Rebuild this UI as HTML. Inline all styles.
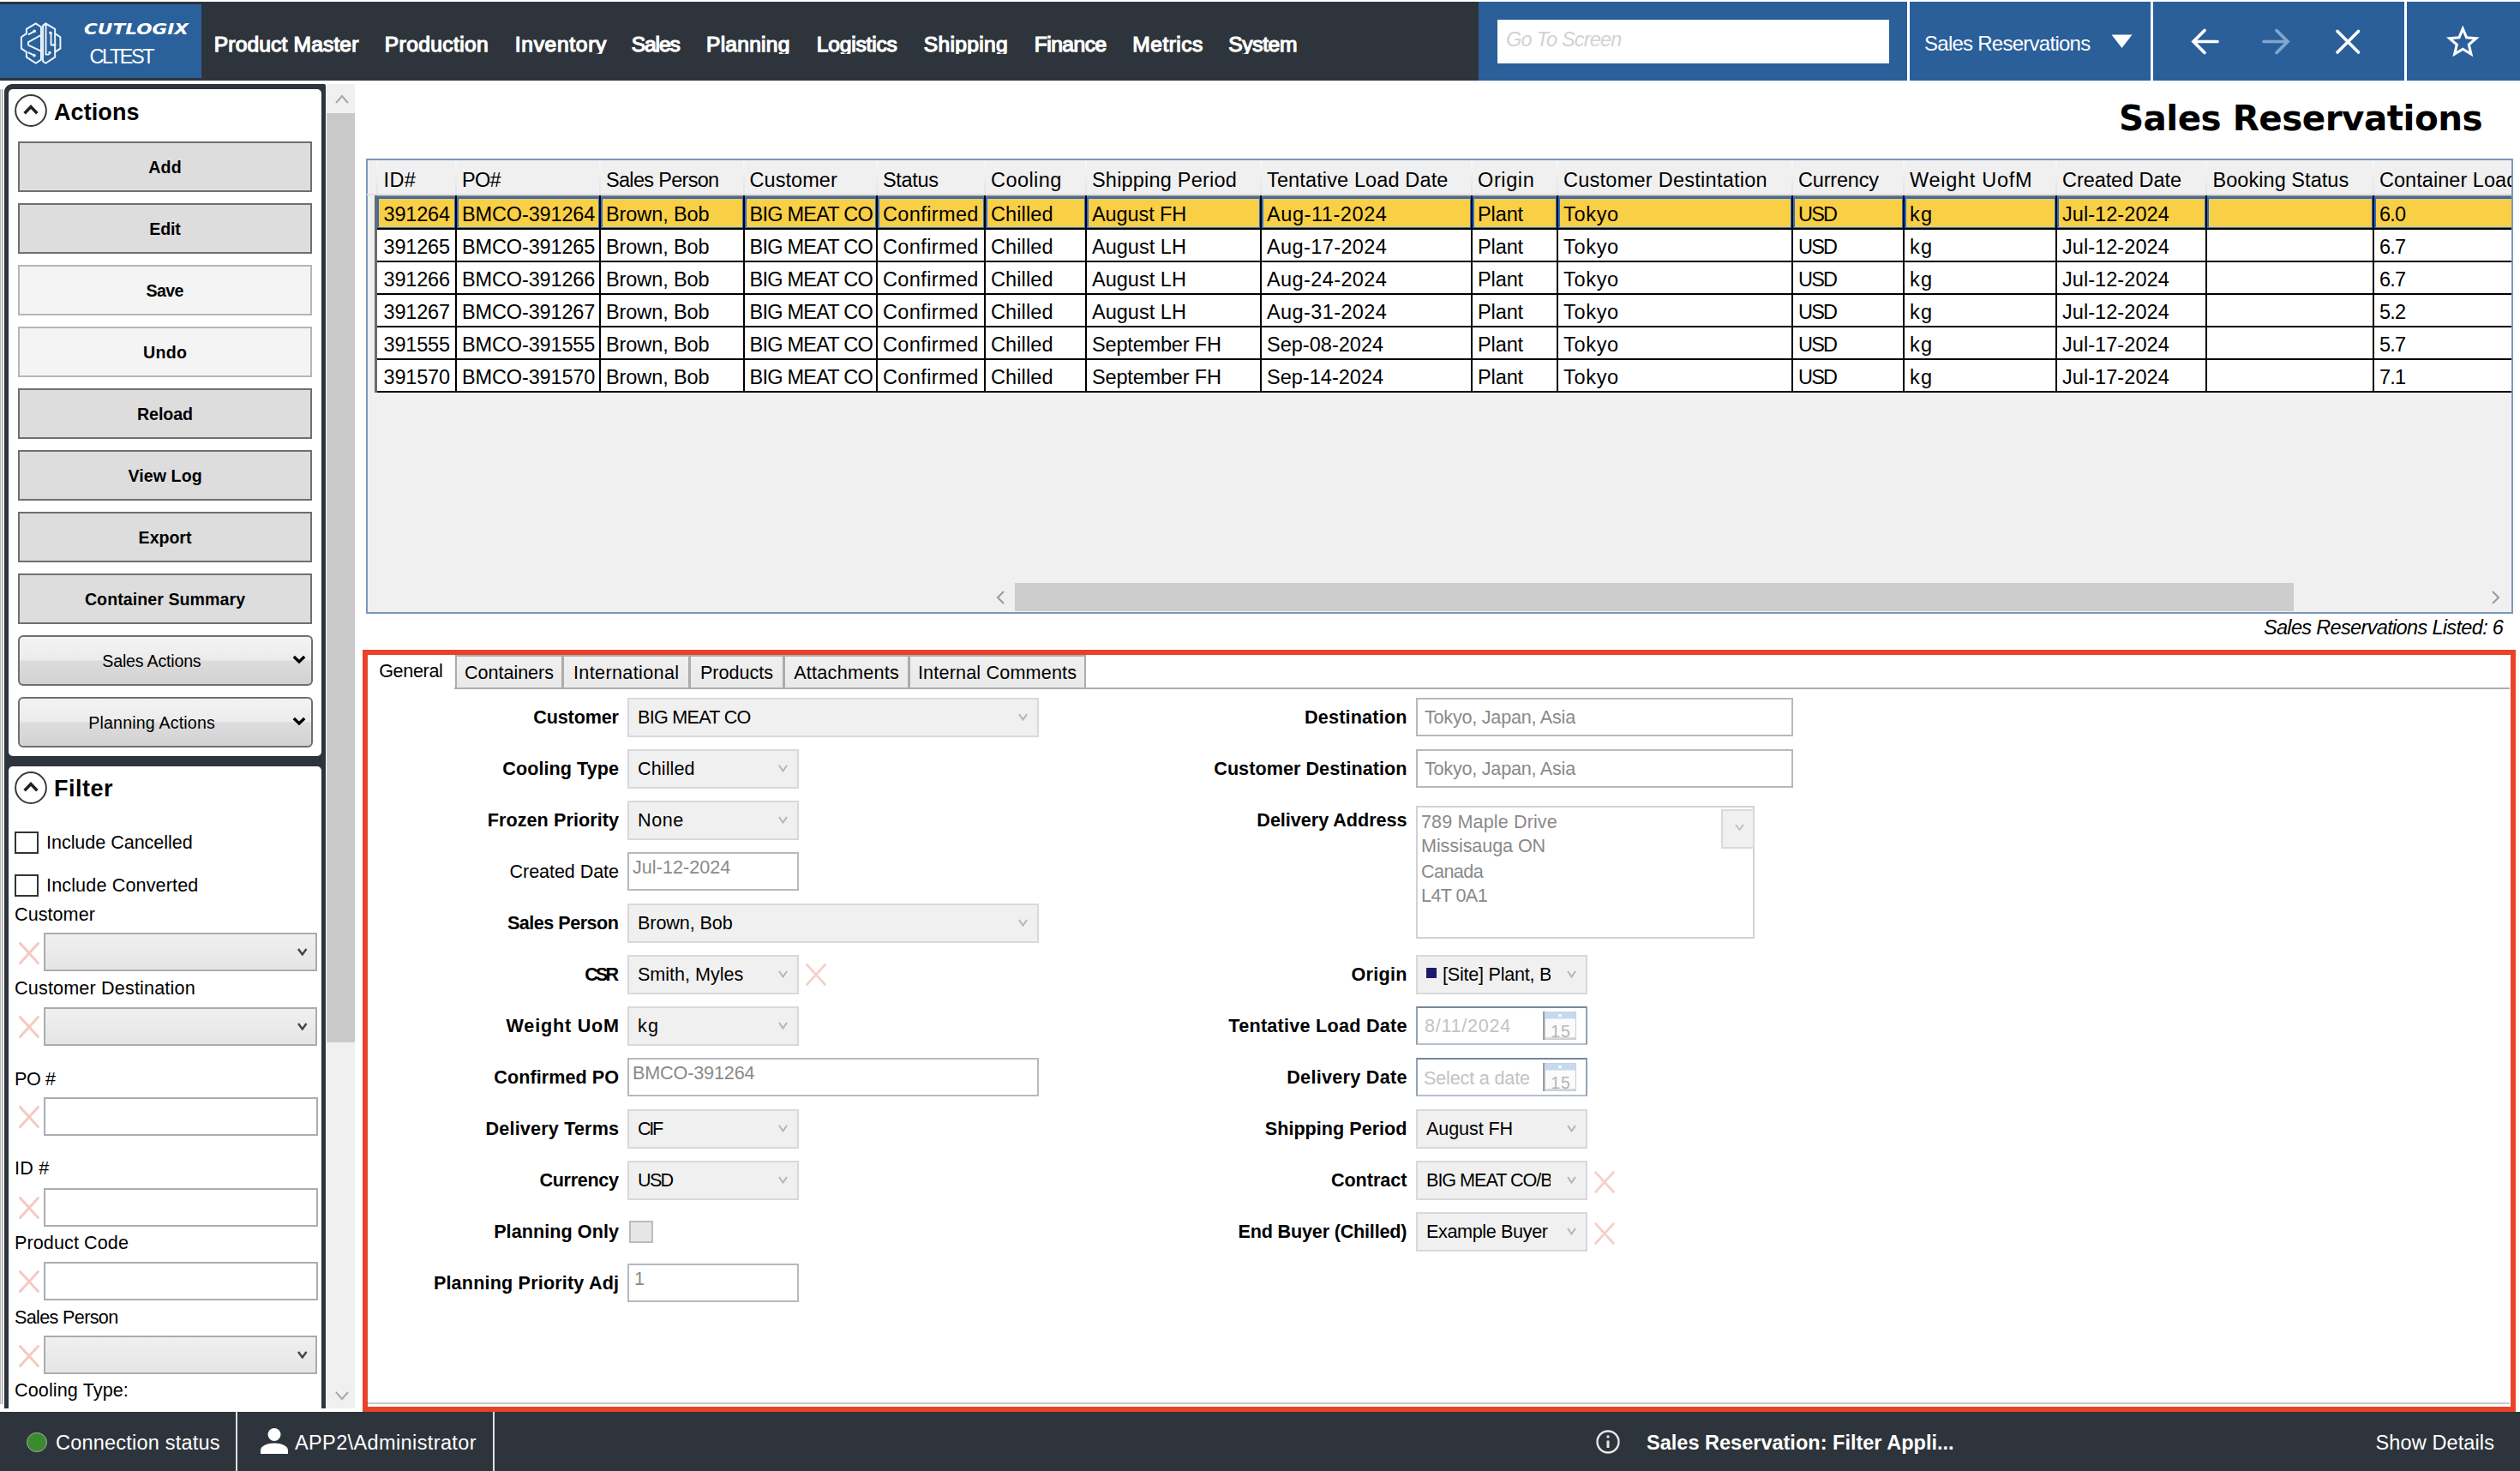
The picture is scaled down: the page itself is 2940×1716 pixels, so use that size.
<!DOCTYPE html>
<html><head><meta charset="utf-8"><title>Sales Reservations</title>
<style>
html,body{margin:0;padding:0;background:#fff;}
body{width:2940px;height:1716px;overflow:hidden;position:relative;font-family:"Liberation Sans",sans-serif;}
.t{position:absolute;white-space:nowrap;}
</style></head>
<body>
<!-- top -->
<div style="position:absolute;left:0px;top:2px;width:2940px;height:92px;background:#2e343b;"></div>
<div style="position:absolute;left:0px;top:5px;width:235px;height:86px;background:#2b619b;"></div>
<div style="position:absolute;left:1725px;top:2px;width:1215px;height:92px;background:#2a5f9a;"></div>
<svg style="position:absolute;left:14px;top:16px" width="70" height="68" viewBox="0 0 1514 1471" fill="none" stroke="#eef4fa" stroke-width="42" stroke-linejoin="round" stroke-linecap="round">
<path d="M600 245 L365 385 V500 L235 590 V880 L365 965 V1095 L600 1250 L735 1160 V335 Z"/>
<path d="M850 245 L1085 385 V500 L1220 590 V880 L1085 965 V1095 L850 1250 L780 1200 V300 Z"/>
<path d="M735 540 L410 715 V790 L735 945"/>
<path d="M570 440 L420 520 M560 1050 L420 980"/>
<path d="M855 290 V1030 H930 M985 490 V790 L1070 790 M1085 500 V965"/>
<g fill="#e8f0f8" stroke="none"><circle cx="565" cy="440" r="40"/><circle cx="560" cy="1050" r="40"/><circle cx="950" cy="985" r="38"/><circle cx="972" cy="482" r="38"/><circle cx="1075" cy="782" r="36"/><circle cx="853" cy="285" r="30"/></g>
</svg>
<div class="t" style="left:98px;top:21px;height:26px;line-height:26px;font-family:'DejaVu Sans',sans-serif;font-weight:bold;font-style:italic;font-size:17.5px;color:#fff;transform-origin:0 50%;transform:scaleX(1.235);">CUTLOGIX</div>
<div id="t1" class="t" style="top:43.1px;height:47px;line-height:47px;font-size:23.5px;letter-spacing:-2.45px;color:#fff;left:104.5px;">CLTEST</div>
<div style="position:absolute;left:0;top:0;width:1725px;height:62.5px;overflow:hidden"><div id="t2" class="t" style="top:27.4px;height:49px;line-height:49px;font-size:24.6px;letter-spacing:0.14px;color:#fff;left:249.8px;-webkit-text-stroke:1.25px #fff;">Product Master</div><div id="t3" class="t" style="top:27.4px;height:49px;line-height:49px;font-size:24.6px;letter-spacing:0.38px;color:#fff;left:448.8px;-webkit-text-stroke:1.25px #fff;">Production</div><div id="t4" class="t" style="top:27.4px;height:49px;line-height:49px;font-size:24.6px;letter-spacing:0.67px;color:#fff;left:600.8px;-webkit-text-stroke:1.25px #fff;">Inventory</div><div id="t5" class="t" style="top:27.4px;height:49px;line-height:49px;font-size:24.6px;letter-spacing:-1.13px;color:#fff;left:736.8px;-webkit-text-stroke:1.25px #fff;">Sales</div><div id="t6" class="t" style="top:27.4px;height:49px;line-height:49px;font-size:24.6px;letter-spacing:0.24px;color:#fff;left:824.0px;-webkit-text-stroke:1.25px #fff;">Planning</div><div id="t7" class="t" style="top:27.4px;height:49px;line-height:49px;font-size:24.6px;letter-spacing:-0.21px;color:#fff;left:952.8px;-webkit-text-stroke:1.25px #fff;">Logistics</div><div id="t8" class="t" style="top:27.4px;height:49px;line-height:49px;font-size:24.6px;letter-spacing:0.32px;color:#fff;left:1077.7px;-webkit-text-stroke:1.25px #fff;">Shipping</div><div id="t9" class="t" style="top:27.4px;height:49px;line-height:49px;font-size:24.6px;letter-spacing:-0.50px;color:#fff;left:1206.7px;-webkit-text-stroke:1.25px #fff;">Finance</div><div id="t10" class="t" style="top:27.4px;height:49px;line-height:49px;font-size:24.6px;letter-spacing:0.46px;color:#fff;left:1321.3px;-webkit-text-stroke:1.25px #fff;">Metrics</div><div id="t11" class="t" style="top:27.4px;height:49px;line-height:49px;font-size:24.6px;letter-spacing:-0.38px;color:#fff;left:1433.3px;-webkit-text-stroke:1.25px #fff;">System</div></div>
<div style="position:absolute;left:1747px;top:23px;width:457px;height:51px;background:#fff;"></div>
<div id="t12" class="t" style="top:23.3px;height:47px;line-height:47px;font-size:23.5px;letter-spacing:-0.79px;color:#d2d2d2;font-style:italic;left:1757.0px;">Go To Screen</div>
<div style="position:absolute;left:2225px;top:2px;width:3px;height:92px;background:#fff;"></div>
<div style="position:absolute;left:2509px;top:2px;width:3px;height:92px;background:#fff;"></div>
<div style="position:absolute;left:2805px;top:2px;width:3px;height:92px;background:#fff;"></div>
<div id="t13" class="t" style="top:27.1px;height:48px;line-height:48px;font-size:24px;letter-spacing:-0.74px;color:#fff;left:2245.0px;">Sales Reservations</div>
<svg style="position:absolute;left:2440px;top:20px" width="480" height="60" viewBox="2440 20 480 60" fill="none" stroke="#fff" stroke-width="3.7" stroke-linecap="round">
<path d="M2463.5 40.5 H2487.5 L2475.5 56 Z" fill="#fff" stroke="none"/>
<path d="M2587 48.5 H2559 M2572 35.5 L2559 48.5 L2572 61.5"/>
<path d="M2641 48.5 H2669 M2656 35.5 L2669 48.5 L2656 61.5" stroke="#82a6cd"/>
<path d="M2727 36.5 L2751.5 61 M2751.5 36.5 L2727 61"/>
<path d="M2873.3 33.5 L2877.6 43.9 L2888.8 44.8 L2880.3 52.1 L2882.9 63 L2873.3 57.2 L2863.7 63 L2866.3 52.1 L2857.8 44.8 L2869 43.9 Z" stroke-width="3.1" stroke-linejoin="miter"/>
</svg>
<!-- left -->
<div style="position:absolute;left:0px;top:104px;width:1px;height:1534px;background:#b8b8b8;"></div>
<div style="position:absolute;left:2px;top:104px;width:1px;height:1534px;background:#8e8e8e;"></div>
<div style="position:absolute;left:5px;top:98px;width:375px;height:1550px;background:#2e343b;border-radius:9px 2px 0 0;"></div>
<div style="position:absolute;left:10px;top:104px;width:365px;height:778px;background:#fff;border-radius:5px;"></div>
<div style="position:absolute;left:10px;top:894px;width:365px;height:749px;background:#fff;border-radius:5px 5px 0 0;"></div>
<div style="position:absolute;left:0px;top:1643px;width:420px;height:5px;background:#fff;"></div>
<div style="position:absolute;left:381px;top:98px;width:33px;height:1545px;background:#f0f0f0;"></div>
<div style="position:absolute;left:381px;top:132px;width:33px;height:1084px;background:#c9c9c9;"></div>
<svg style="position:absolute;left:390px;top:110px" width="18" height="12" viewBox="-2 -2 18 12" fill="none" stroke="#a8a8a8" stroke-width="2"><path d="M0 8 L7 0 L14 8"/></svg>
<svg style="position:absolute;left:390px;top:1622px" width="18" height="12" viewBox="-2 -2 18 12" fill="none" stroke="#a8a8a8" stroke-width="2"><path d="M0 0 L7.0 8 L14 0"/></svg>
<svg style="position:absolute;left:13.5px;top:107.30000000000001px" width="44" height="44" viewBox="-22 -22 44 44" fill="none"><circle r="17.9" stroke="#3a3a3a" stroke-width="2"/><path d="M-7.4 3.2 L0 -4.4 L7.4 3.2" stroke="#222" stroke-width="3.5"/></svg>
<div id="t14" class="t" style="top:103.8px;height:54px;line-height:54px;font-size:27px;letter-spacing:0.08px;color:#000;font-weight:bold;left:63.0px;">Actions</div>
<svg style="position:absolute;left:13.5px;top:897px" width="44" height="44" viewBox="-22 -22 44 44" fill="none"><circle r="17.9" stroke="#3a3a3a" stroke-width="2"/><path d="M-7.4 3.2 L0 -4.4 L7.4 3.2" stroke="#222" stroke-width="3.5"/></svg>
<div id="t15" class="t" style="top:893.3px;height:54px;line-height:54px;font-size:27px;letter-spacing:0.50px;color:#000;font-weight:bold;left:63.0px;">Filter</div>
<div style="position:absolute;left:21px;top:165px;width:339px;height:55px;background:#dddddd;border:2px solid #6f6f6f;"></div>
<div id="t16" class="t" style="top:175.8px;height:39px;line-height:39px;font-size:19.6px;letter-spacing:0.17px;color:#000;font-weight:bold;left:-807.4px;width:2000px;text-align:center;">Add</div>
<div style="position:absolute;left:21px;top:237px;width:339px;height:55px;background:#dddddd;border:2px solid #6f6f6f;"></div>
<div id="t17" class="t" style="top:247.8px;height:39px;line-height:39px;font-size:19.6px;letter-spacing:-0.23px;color:#000;font-weight:bold;left:-807.6px;width:2000px;text-align:center;">Edit</div>
<div style="position:absolute;left:21px;top:309px;width:339px;height:55px;background:#f4f4f4;border:2px solid #b4b6b8;"></div>
<div id="t18" class="t" style="top:319.8px;height:39px;line-height:39px;font-size:19.6px;letter-spacing:-0.57px;color:#000;font-weight:bold;left:-807.8px;width:2000px;text-align:center;">Save</div>
<div style="position:absolute;left:21px;top:381px;width:339px;height:55px;background:#f4f4f4;border:2px solid #b4b6b8;"></div>
<div id="t19" class="t" style="top:391.8px;height:39px;line-height:39px;font-size:19.6px;letter-spacing:0.29px;color:#000;font-weight:bold;left:-807.4px;width:2000px;text-align:center;">Undo</div>
<div style="position:absolute;left:21px;top:453px;width:339px;height:55px;background:#dddddd;border:2px solid #6f6f6f;"></div>
<div id="t20" class="t" style="top:463.8px;height:39px;line-height:39px;font-size:19.6px;letter-spacing:-0.04px;color:#000;font-weight:bold;left:-807.5px;width:2000px;text-align:center;">Reload</div>
<div style="position:absolute;left:21px;top:525px;width:339px;height:55px;background:#dddddd;border:2px solid #6f6f6f;"></div>
<div id="t21" class="t" style="top:535.8px;height:39px;line-height:39px;font-size:19.6px;letter-spacing:0.10px;color:#000;font-weight:bold;left:-807.4px;width:2000px;text-align:center;">View Log</div>
<div style="position:absolute;left:21px;top:597px;width:339px;height:55px;background:#dddddd;border:2px solid #6f6f6f;"></div>
<div id="t22" class="t" style="top:607.8px;height:39px;line-height:39px;font-size:19.6px;letter-spacing:-0.05px;color:#000;font-weight:bold;left:-807.5px;width:2000px;text-align:center;">Export</div>
<div style="position:absolute;left:21px;top:669px;width:339px;height:55px;background:#dddddd;border:2px solid #6f6f6f;"></div>
<div id="t23" class="t" style="top:679.8px;height:39px;line-height:39px;font-size:19.6px;letter-spacing:0.06px;color:#000;font-weight:bold;left:-807.5px;width:2000px;text-align:center;">Container Summary</div>
<div style="position:absolute;left:21px;top:741px;width:340px;height:55px;border:2px solid #6f6f6f;border-radius:6px;background:linear-gradient(#f3f3f3 0%,#ececec 48%,#dcdcdc 52%,#d2d2d2 100%);"></div>
<div id="t24" class="t" style="top:751.8px;height:39px;line-height:39px;font-size:19.6px;letter-spacing:-0.19px;color:#000;left:-823.1px;width:2000px;text-align:center;">Sales Actions</div>
<svg style="position:absolute;left:341px;top:764px" width="16" height="12" viewBox="0 0 16 12"><path d="M1.8 2 L8 8 L14.2 2" fill="none" stroke="#000" stroke-width="3.4"/></svg>
<div style="position:absolute;left:21px;top:813px;width:340px;height:55px;border:2px solid #6f6f6f;border-radius:6px;background:linear-gradient(#f3f3f3 0%,#ececec 48%,#dcdcdc 52%,#d2d2d2 100%);"></div>
<div id="t25" class="t" style="top:823.8px;height:39px;line-height:39px;font-size:19.6px;letter-spacing:0.18px;color:#000;left:-822.9px;width:2000px;text-align:center;">Planning Actions</div>
<svg style="position:absolute;left:341px;top:836px" width="16" height="12" viewBox="0 0 16 12"><path d="M1.8 2 L8 8 L14.2 2" fill="none" stroke="#000" stroke-width="3.4"/></svg>
<div style="position:absolute;left:17px;top:970px;width:24px;height:22px;border:2px solid #333;background:#fff;"></div>
<div style="position:absolute;left:17px;top:1020px;width:24px;height:22px;border:2px solid #333;background:#fff;"></div>
<div id="t26" class="t" style="top:960.6px;height:43px;line-height:43px;font-size:21.6px;letter-spacing:-0.06px;color:#000;left:54.0px;">Include Cancelled</div>
<div id="t27" class="t" style="top:1010.6px;height:43px;line-height:43px;font-size:21.6px;letter-spacing:0.13px;color:#000;left:54.0px;">Include Converted</div>
<div id="t28" class="t" style="top:1044.8px;height:43px;line-height:43px;font-size:21.6px;letter-spacing:0.04px;color:#000;left:17.0px;">Customer</div>
<svg style="position:absolute;left:21.5px;top:1099px" width="24" height="26" viewBox="0 0 24 26" fill="none" stroke="#f5c9c2" stroke-width="3" stroke-linecap="round"><path d="M1.5 1.5 L22.5 24.5 M22.5 1.5 L1.5 24.5"/></svg>
<div style="position:absolute;left:50.5px;top:1088px;width:315.5px;height:41px;border:2px solid #acacac;background:linear-gradient(#f0f0f0,#e5e5e5);"></div>
<svg style="position:absolute;left:345.5px;top:1104.5px" width="13.5" height="10.5" viewBox="-2 -2 13.5 10.5" fill="none" stroke="#444" stroke-width="2.4"><path d="M0 0 L4.75 6.5 L9.5 0"/></svg>
<div id="t29" class="t" style="top:1130.8px;height:43px;line-height:43px;font-size:21.6px;letter-spacing:0.16px;color:#000;left:17.0px;">Customer Destination</div>
<svg style="position:absolute;left:21.5px;top:1185px" width="24" height="26" viewBox="0 0 24 26" fill="none" stroke="#f5c9c2" stroke-width="3" stroke-linecap="round"><path d="M1.5 1.5 L22.5 24.5 M22.5 1.5 L1.5 24.5"/></svg>
<div style="position:absolute;left:50.5px;top:1175px;width:315.5px;height:41px;border:2px solid #acacac;background:linear-gradient(#f0f0f0,#e5e5e5);"></div>
<svg style="position:absolute;left:345.5px;top:1191.5px" width="13.5" height="10.5" viewBox="-2 -2 13.5 10.5" fill="none" stroke="#444" stroke-width="2.4"><path d="M0 0 L4.75 6.5 L9.5 0"/></svg>
<div id="t30" class="t" style="top:1236.8px;height:43px;line-height:43px;font-size:21.6px;letter-spacing:-0.43px;color:#000;left:17.0px;">PO #</div>
<svg style="position:absolute;left:21.5px;top:1290px" width="24" height="26" viewBox="0 0 24 26" fill="none" stroke="#f5c9c2" stroke-width="3" stroke-linecap="round"><path d="M1.5 1.5 L22.5 24.5 M22.5 1.5 L1.5 24.5"/></svg>
<div style="position:absolute;left:51px;top:1280px;width:316px;height:41px;border:2px solid #abadb3;background:#fff;"></div>
<div id="t31" class="t" style="top:1340.8px;height:43px;line-height:43px;font-size:21.6px;letter-spacing:0.23px;color:#000;left:17.0px;">ID #</div>
<svg style="position:absolute;left:21.5px;top:1396px" width="24" height="26" viewBox="0 0 24 26" fill="none" stroke="#f5c9c2" stroke-width="3" stroke-linecap="round"><path d="M1.5 1.5 L22.5 24.5 M22.5 1.5 L1.5 24.5"/></svg>
<div style="position:absolute;left:51px;top:1386px;width:316px;height:41px;border:2px solid #abadb3;background:#fff;"></div>
<div id="t32" class="t" style="top:1427.8px;height:43px;line-height:43px;font-size:21.6px;letter-spacing:0.08px;color:#000;left:17.0px;">Product Code</div>
<svg style="position:absolute;left:21.5px;top:1482px" width="24" height="26" viewBox="0 0 24 26" fill="none" stroke="#f5c9c2" stroke-width="3" stroke-linecap="round"><path d="M1.5 1.5 L22.5 24.5 M22.5 1.5 L1.5 24.5"/></svg>
<div style="position:absolute;left:51px;top:1472px;width:316px;height:41px;border:2px solid #abadb3;background:#fff;"></div>
<div id="t33" class="t" style="top:1514.8px;height:43px;line-height:43px;font-size:21.6px;letter-spacing:-0.66px;color:#000;left:17.0px;">Sales Person</div>
<svg style="position:absolute;left:21.5px;top:1569px" width="24" height="26" viewBox="0 0 24 26" fill="none" stroke="#f5c9c2" stroke-width="3" stroke-linecap="round"><path d="M1.5 1.5 L22.5 24.5 M22.5 1.5 L1.5 24.5"/></svg>
<div style="position:absolute;left:50.5px;top:1558px;width:315.5px;height:41px;border:2px solid #acacac;background:linear-gradient(#f0f0f0,#e5e5e5);"></div>
<svg style="position:absolute;left:345.5px;top:1574.5px" width="13.5" height="10.5" viewBox="-2 -2 13.5 10.5" fill="none" stroke="#444" stroke-width="2.4"><path d="M0 0 L4.75 6.5 L9.5 0"/></svg>
<div id="t34" class="t" style="top:1599.8px;height:43px;line-height:43px;font-size:21.6px;letter-spacing:0.10px;color:#000;left:17.0px;">Cooling Type:</div>
<!-- grid -->
<div class="t" style="left:896px;width:2000px;text-align:right;top:108px;height:60px;line-height:60px;font-family:'DejaVu Sans',sans-serif;font-weight:bold;font-size:40.5px;letter-spacing:-0.55px;color:#000;">Sales Reservations</div>
<div style="position:absolute;left:426.5px;top:185px;width:2501px;height:526.5px;border:2px solid #7b97bd;background:#f0f0f0;"></div>
<div style="position:absolute;left:0;top:0;width:2929.5px;height:713px;overflow:hidden"><div style="position:absolute;left:439px;top:188px;width:2px;height:40px;background:linear-gradient(#f8f8f8,#e2e2e2);"></div><div id="t35" class="t" style="top:187.0px;height:47px;line-height:47px;font-size:23.5px;letter-spacing:0.39px;color:#000;left:447.5px;">ID#</div><div style="position:absolute;left:531px;top:188px;width:2px;height:40px;background:linear-gradient(#f8f8f8,#e2e2e2);"></div><div id="t36" class="t" style="top:187.0px;height:47px;line-height:47px;font-size:23.5px;letter-spacing:-0.67px;color:#000;left:539.0px;">PO#</div><div style="position:absolute;left:699px;top:188px;width:2px;height:40px;background:linear-gradient(#f8f8f8,#e2e2e2);"></div><div id="t37" class="t" style="top:187.0px;height:47px;line-height:47px;font-size:23.5px;letter-spacing:-0.69px;color:#000;left:707.0px;">Sales Person</div><div style="position:absolute;left:867px;top:188px;width:2px;height:40px;background:linear-gradient(#f8f8f8,#e2e2e2);"></div><div id="t38" class="t" style="top:187.0px;height:47px;line-height:47px;font-size:23.5px;letter-spacing:0.06px;color:#000;left:874.5px;">Customer</div><div style="position:absolute;left:1022px;top:188px;width:2px;height:40px;background:linear-gradient(#f8f8f8,#e2e2e2);"></div><div id="t39" class="t" style="top:187.0px;height:47px;line-height:47px;font-size:23.5px;letter-spacing:-0.34px;color:#000;left:1030.0px;">Status</div><div style="position:absolute;left:1148px;top:188px;width:2px;height:40px;background:linear-gradient(#f8f8f8,#e2e2e2);"></div><div id="t40" class="t" style="top:187.0px;height:47px;line-height:47px;font-size:23.5px;letter-spacing:0.43px;color:#000;left:1156.0px;">Cooling</div><div style="position:absolute;left:1266px;top:188px;width:2px;height:40px;background:linear-gradient(#f8f8f8,#e2e2e2);"></div><div id="t41" class="t" style="top:187.0px;height:47px;line-height:47px;font-size:23.5px;letter-spacing:0.20px;color:#000;left:1274.0px;">Shipping Period</div><div style="position:absolute;left:1470px;top:188px;width:2px;height:40px;background:linear-gradient(#f8f8f8,#e2e2e2);"></div><div id="t42" class="t" style="top:187.0px;height:47px;line-height:47px;font-size:23.5px;letter-spacing:0.13px;color:#000;left:1478.0px;">Tentative Load Date</div><div style="position:absolute;left:1716px;top:188px;width:2px;height:40px;background:linear-gradient(#f8f8f8,#e2e2e2);"></div><div id="t43" class="t" style="top:187.0px;height:47px;line-height:47px;font-size:23.5px;letter-spacing:0.61px;color:#000;left:1724.0px;">Origin</div><div style="position:absolute;left:1816px;top:188px;width:2px;height:40px;background:linear-gradient(#f8f8f8,#e2e2e2);"></div><div id="t44" class="t" style="top:187.0px;height:47px;line-height:47px;font-size:23.5px;letter-spacing:0.26px;color:#000;left:1824.0px;">Customer Destintation</div><div style="position:absolute;left:2090px;top:188px;width:2px;height:40px;background:linear-gradient(#f8f8f8,#e2e2e2);"></div><div id="t45" class="t" style="top:187.0px;height:47px;line-height:47px;font-size:23.5px;letter-spacing:-0.20px;color:#000;left:2098.0px;">Currency</div><div style="position:absolute;left:2220px;top:188px;width:2px;height:40px;background:linear-gradient(#f8f8f8,#e2e2e2);"></div><div id="t46" class="t" style="top:187.0px;height:47px;line-height:47px;font-size:23.5px;letter-spacing:0.73px;color:#000;left:2228.0px;">Weight UofM</div><div style="position:absolute;left:2398px;top:188px;width:2px;height:40px;background:linear-gradient(#f8f8f8,#e2e2e2);"></div><div id="t47" class="t" style="top:187.0px;height:47px;line-height:47px;font-size:23.5px;letter-spacing:-0.07px;color:#000;left:2406.0px;">Created Date</div><div style="position:absolute;left:2573px;top:188px;width:2px;height:40px;background:linear-gradient(#f8f8f8,#e2e2e2);"></div><div id="t48" class="t" style="top:187.0px;height:47px;line-height:47px;font-size:23.5px;letter-spacing:0.05px;color:#000;left:2581.5px;">Booking Status</div><div style="position:absolute;left:2768px;top:188px;width:2px;height:40px;background:linear-gradient(#f8f8f8,#e2e2e2);"></div><div id="t49" class="t" style="top:187.0px;height:47px;line-height:47px;font-size:23.5px;letter-spacing:0.04px;color:#000;left:2776.0px;">Container Load</div><div style="position:absolute;left:428px;top:226px;width:2503px;height:2px;background:#e0e0e0;"></div><div style="position:absolute;left:440px;top:230px;width:92px;height:37px;background:#f8cf45;border:2px solid #2f6ccc;box-sizing:border-box;"></div><div id="t50" class="t" style="top:226.6px;height:47px;line-height:47px;font-size:23.5px;letter-spacing:-0.17px;color:#000;left:447.5px;">391264</div><div style="position:absolute;left:533px;top:230px;width:167px;height:37px;background:#f8cf45;border:2px solid #2f6ccc;box-sizing:border-box;"></div><div id="t51" class="t" style="top:226.6px;height:47px;line-height:47px;font-size:23.5px;letter-spacing:-0.14px;color:#000;left:539.0px;">BMCO-391264</div><div style="position:absolute;left:701px;top:230px;width:167px;height:37px;background:#f8cf45;border:2px solid #2f6ccc;box-sizing:border-box;"></div><div id="t52" class="t" style="top:226.6px;height:47px;line-height:47px;font-size:23.5px;letter-spacing:-0.09px;color:#000;left:707.0px;">Brown, Bob</div><div style="position:absolute;left:869px;top:230px;width:154px;height:37px;background:#f8cf45;border:2px solid #2f6ccc;box-sizing:border-box;"></div><div id="t53" class="t" style="top:226.6px;height:47px;line-height:47px;font-size:23.5px;letter-spacing:-0.76px;color:#000;left:874.5px;">BIG MEAT CO</div><div style="position:absolute;left:1024px;top:230px;width:125px;height:37px;background:#f8cf45;border:2px solid #2f6ccc;box-sizing:border-box;"></div><div id="t54" class="t" style="top:226.6px;height:47px;line-height:47px;font-size:23.5px;letter-spacing:0.38px;color:#000;left:1030.0px;">Confirmed</div><div style="position:absolute;left:1150px;top:230px;width:117px;height:37px;background:#f8cf45;border:2px solid #2f6ccc;box-sizing:border-box;"></div><div id="t55" class="t" style="top:226.6px;height:47px;line-height:47px;font-size:23.5px;letter-spacing:0.11px;color:#000;left:1156.0px;">Chilled</div><div style="position:absolute;left:1268px;top:230px;width:203px;height:37px;background:#f8cf45;border:2px solid #2f6ccc;box-sizing:border-box;"></div><div id="t56" class="t" style="top:226.6px;height:47px;line-height:47px;font-size:23.5px;letter-spacing:-0.09px;color:#000;left:1274.0px;">August FH</div><div style="position:absolute;left:1472px;top:230px;width:245px;height:37px;background:#f8cf45;border:2px solid #2f6ccc;box-sizing:border-box;"></div><div id="t57" class="t" style="top:226.6px;height:47px;line-height:47px;font-size:23.5px;letter-spacing:0.57px;color:#000;left:1478.0px;">Aug-11-2024</div><div style="position:absolute;left:1718px;top:230px;width:99px;height:37px;background:#f8cf45;border:2px solid #2f6ccc;box-sizing:border-box;"></div><div id="t58" class="t" style="top:226.6px;height:47px;line-height:47px;font-size:23.5px;letter-spacing:-0.11px;color:#000;left:1724.0px;">Plant</div><div style="position:absolute;left:1818px;top:230px;width:273px;height:37px;background:#f8cf45;border:2px solid #2f6ccc;box-sizing:border-box;"></div><div id="t59" class="t" style="top:226.6px;height:47px;line-height:47px;font-size:23.5px;letter-spacing:0.70px;color:#000;left:1824.0px;">Tokyo</div><div style="position:absolute;left:2092px;top:230px;width:129px;height:37px;background:#f8cf45;border:2px solid #2f6ccc;box-sizing:border-box;"></div><div id="t60" class="t" style="top:226.6px;height:47px;line-height:47px;font-size:23.5px;letter-spacing:-1.80px;color:#000;left:2098.0px;">USD</div><div style="position:absolute;left:2222px;top:230px;width:177px;height:37px;background:#f8cf45;border:2px solid #2f6ccc;box-sizing:border-box;"></div><div id="t61" class="t" style="top:226.6px;height:47px;line-height:47px;font-size:23.5px;letter-spacing:1.22px;color:#000;left:2228.0px;">kg</div><div style="position:absolute;left:2400px;top:230px;width:174px;height:37px;background:#f8cf45;border:2px solid #2f6ccc;box-sizing:border-box;"></div><div id="t62" class="t" style="top:226.6px;height:47px;line-height:47px;font-size:23.5px;letter-spacing:0.06px;color:#000;left:2406.0px;">Jul-12-2024</div><div style="position:absolute;left:2575px;top:230px;width:194px;height:37px;background:#f8cf45;border:2px solid #2f6ccc;box-sizing:border-box;"></div><div style="position:absolute;left:2770px;top:230px;width:190px;height:37px;background:#f8cf45;border:2px solid #2f6ccc;box-sizing:border-box;"></div><div id="t63" class="t" style="top:226.6px;height:47px;line-height:47px;font-size:23.5px;letter-spacing:-0.81px;color:#000;left:2776.0px;">6.0</div><div style="position:absolute;left:440px;top:268px;width:92px;height:37px;background:#fff;"></div><div id="t64" class="t" style="top:264.6px;height:47px;line-height:47px;font-size:23.5px;letter-spacing:-0.17px;color:#000;left:447.5px;">391265</div><div style="position:absolute;left:533px;top:268px;width:167px;height:37px;background:#fff;"></div><div id="t65" class="t" style="top:264.6px;height:47px;line-height:47px;font-size:23.5px;letter-spacing:-0.14px;color:#000;left:539.0px;">BMCO-391265</div><div style="position:absolute;left:701px;top:268px;width:167px;height:37px;background:#fff;"></div><div id="t66" class="t" style="top:264.6px;height:47px;line-height:47px;font-size:23.5px;letter-spacing:-0.09px;color:#000;left:707.0px;">Brown, Bob</div><div style="position:absolute;left:869px;top:268px;width:154px;height:37px;background:#fff;"></div><div id="t67" class="t" style="top:264.6px;height:47px;line-height:47px;font-size:23.5px;letter-spacing:-0.76px;color:#000;left:874.5px;">BIG MEAT CO</div><div style="position:absolute;left:1024px;top:268px;width:125px;height:37px;background:#fff;"></div><div id="t68" class="t" style="top:264.6px;height:47px;line-height:47px;font-size:23.5px;letter-spacing:0.38px;color:#000;left:1030.0px;">Confirmed</div><div style="position:absolute;left:1150px;top:268px;width:117px;height:37px;background:#fff;"></div><div id="t69" class="t" style="top:264.6px;height:47px;line-height:47px;font-size:23.5px;letter-spacing:0.11px;color:#000;left:1156.0px;">Chilled</div><div style="position:absolute;left:1268px;top:268px;width:203px;height:37px;background:#fff;"></div><div id="t70" class="t" style="top:264.6px;height:47px;line-height:47px;font-size:23.5px;letter-spacing:0.02px;color:#000;left:1274.0px;">August LH</div><div style="position:absolute;left:1472px;top:268px;width:245px;height:37px;background:#fff;"></div><div id="t71" class="t" style="top:264.6px;height:47px;line-height:47px;font-size:23.5px;letter-spacing:0.40px;color:#000;left:1478.0px;">Aug-17-2024</div><div style="position:absolute;left:1718px;top:268px;width:99px;height:37px;background:#fff;"></div><div id="t72" class="t" style="top:264.6px;height:47px;line-height:47px;font-size:23.5px;letter-spacing:-0.11px;color:#000;left:1724.0px;">Plant</div><div style="position:absolute;left:1818px;top:268px;width:273px;height:37px;background:#fff;"></div><div id="t73" class="t" style="top:264.6px;height:47px;line-height:47px;font-size:23.5px;letter-spacing:0.70px;color:#000;left:1824.0px;">Tokyo</div><div style="position:absolute;left:2092px;top:268px;width:129px;height:37px;background:#fff;"></div><div id="t74" class="t" style="top:264.6px;height:47px;line-height:47px;font-size:23.5px;letter-spacing:-1.80px;color:#000;left:2098.0px;">USD</div><div style="position:absolute;left:2222px;top:268px;width:177px;height:37px;background:#fff;"></div><div id="t75" class="t" style="top:264.6px;height:47px;line-height:47px;font-size:23.5px;letter-spacing:1.22px;color:#000;left:2228.0px;">kg</div><div style="position:absolute;left:2400px;top:268px;width:174px;height:37px;background:#fff;"></div><div id="t76" class="t" style="top:264.6px;height:47px;line-height:47px;font-size:23.5px;letter-spacing:0.06px;color:#000;left:2406.0px;">Jul-12-2024</div><div style="position:absolute;left:2575px;top:268px;width:194px;height:37px;background:#fff;"></div><div style="position:absolute;left:2770px;top:268px;width:190px;height:37px;background:#fff;"></div><div id="t77" class="t" style="top:264.6px;height:47px;line-height:47px;font-size:23.5px;letter-spacing:-0.81px;color:#000;left:2776.0px;">6.7</div><div style="position:absolute;left:440px;top:306px;width:92px;height:37px;background:#fff;"></div><div id="t78" class="t" style="top:302.6px;height:47px;line-height:47px;font-size:23.5px;letter-spacing:-0.17px;color:#000;left:447.5px;">391266</div><div style="position:absolute;left:533px;top:306px;width:167px;height:37px;background:#fff;"></div><div id="t79" class="t" style="top:302.6px;height:47px;line-height:47px;font-size:23.5px;letter-spacing:-0.14px;color:#000;left:539.0px;">BMCO-391266</div><div style="position:absolute;left:701px;top:306px;width:167px;height:37px;background:#fff;"></div><div id="t80" class="t" style="top:302.6px;height:47px;line-height:47px;font-size:23.5px;letter-spacing:-0.09px;color:#000;left:707.0px;">Brown, Bob</div><div style="position:absolute;left:869px;top:306px;width:154px;height:37px;background:#fff;"></div><div id="t81" class="t" style="top:302.6px;height:47px;line-height:47px;font-size:23.5px;letter-spacing:-0.76px;color:#000;left:874.5px;">BIG MEAT CO</div><div style="position:absolute;left:1024px;top:306px;width:125px;height:37px;background:#fff;"></div><div id="t82" class="t" style="top:302.6px;height:47px;line-height:47px;font-size:23.5px;letter-spacing:0.38px;color:#000;left:1030.0px;">Confirmed</div><div style="position:absolute;left:1150px;top:306px;width:117px;height:37px;background:#fff;"></div><div id="t83" class="t" style="top:302.6px;height:47px;line-height:47px;font-size:23.5px;letter-spacing:0.11px;color:#000;left:1156.0px;">Chilled</div><div style="position:absolute;left:1268px;top:306px;width:203px;height:37px;background:#fff;"></div><div id="t84" class="t" style="top:302.6px;height:47px;line-height:47px;font-size:23.5px;letter-spacing:0.02px;color:#000;left:1274.0px;">August LH</div><div style="position:absolute;left:1472px;top:306px;width:245px;height:37px;background:#fff;"></div><div id="t85" class="t" style="top:302.6px;height:47px;line-height:47px;font-size:23.5px;letter-spacing:0.40px;color:#000;left:1478.0px;">Aug-24-2024</div><div style="position:absolute;left:1718px;top:306px;width:99px;height:37px;background:#fff;"></div><div id="t86" class="t" style="top:302.6px;height:47px;line-height:47px;font-size:23.5px;letter-spacing:-0.11px;color:#000;left:1724.0px;">Plant</div><div style="position:absolute;left:1818px;top:306px;width:273px;height:37px;background:#fff;"></div><div id="t87" class="t" style="top:302.6px;height:47px;line-height:47px;font-size:23.5px;letter-spacing:0.70px;color:#000;left:1824.0px;">Tokyo</div><div style="position:absolute;left:2092px;top:306px;width:129px;height:37px;background:#fff;"></div><div id="t88" class="t" style="top:302.6px;height:47px;line-height:47px;font-size:23.5px;letter-spacing:-1.80px;color:#000;left:2098.0px;">USD</div><div style="position:absolute;left:2222px;top:306px;width:177px;height:37px;background:#fff;"></div><div id="t89" class="t" style="top:302.6px;height:47px;line-height:47px;font-size:23.5px;letter-spacing:1.22px;color:#000;left:2228.0px;">kg</div><div style="position:absolute;left:2400px;top:306px;width:174px;height:37px;background:#fff;"></div><div id="t90" class="t" style="top:302.6px;height:47px;line-height:47px;font-size:23.5px;letter-spacing:0.06px;color:#000;left:2406.0px;">Jul-12-2024</div><div style="position:absolute;left:2575px;top:306px;width:194px;height:37px;background:#fff;"></div><div style="position:absolute;left:2770px;top:306px;width:190px;height:37px;background:#fff;"></div><div id="t91" class="t" style="top:302.6px;height:47px;line-height:47px;font-size:23.5px;letter-spacing:-0.81px;color:#000;left:2776.0px;">6.7</div><div style="position:absolute;left:440px;top:344px;width:92px;height:37px;background:#fff;"></div><div id="t92" class="t" style="top:340.6px;height:47px;line-height:47px;font-size:23.5px;letter-spacing:-0.17px;color:#000;left:447.5px;">391267</div><div style="position:absolute;left:533px;top:344px;width:167px;height:37px;background:#fff;"></div><div id="t93" class="t" style="top:340.6px;height:47px;line-height:47px;font-size:23.5px;letter-spacing:-0.14px;color:#000;left:539.0px;">BMCO-391267</div><div style="position:absolute;left:701px;top:344px;width:167px;height:37px;background:#fff;"></div><div id="t94" class="t" style="top:340.6px;height:47px;line-height:47px;font-size:23.5px;letter-spacing:-0.09px;color:#000;left:707.0px;">Brown, Bob</div><div style="position:absolute;left:869px;top:344px;width:154px;height:37px;background:#fff;"></div><div id="t95" class="t" style="top:340.6px;height:47px;line-height:47px;font-size:23.5px;letter-spacing:-0.76px;color:#000;left:874.5px;">BIG MEAT CO</div><div style="position:absolute;left:1024px;top:344px;width:125px;height:37px;background:#fff;"></div><div id="t96" class="t" style="top:340.6px;height:47px;line-height:47px;font-size:23.5px;letter-spacing:0.38px;color:#000;left:1030.0px;">Confirmed</div><div style="position:absolute;left:1150px;top:344px;width:117px;height:37px;background:#fff;"></div><div id="t97" class="t" style="top:340.6px;height:47px;line-height:47px;font-size:23.5px;letter-spacing:0.11px;color:#000;left:1156.0px;">Chilled</div><div style="position:absolute;left:1268px;top:344px;width:203px;height:37px;background:#fff;"></div><div id="t98" class="t" style="top:340.6px;height:47px;line-height:47px;font-size:23.5px;letter-spacing:0.02px;color:#000;left:1274.0px;">August LH</div><div style="position:absolute;left:1472px;top:344px;width:245px;height:37px;background:#fff;"></div><div id="t99" class="t" style="top:340.6px;height:47px;line-height:47px;font-size:23.5px;letter-spacing:0.40px;color:#000;left:1478.0px;">Aug-31-2024</div><div style="position:absolute;left:1718px;top:344px;width:99px;height:37px;background:#fff;"></div><div id="t100" class="t" style="top:340.6px;height:47px;line-height:47px;font-size:23.5px;letter-spacing:-0.11px;color:#000;left:1724.0px;">Plant</div><div style="position:absolute;left:1818px;top:344px;width:273px;height:37px;background:#fff;"></div><div id="t101" class="t" style="top:340.6px;height:47px;line-height:47px;font-size:23.5px;letter-spacing:0.70px;color:#000;left:1824.0px;">Tokyo</div><div style="position:absolute;left:2092px;top:344px;width:129px;height:37px;background:#fff;"></div><div id="t102" class="t" style="top:340.6px;height:47px;line-height:47px;font-size:23.5px;letter-spacing:-1.80px;color:#000;left:2098.0px;">USD</div><div style="position:absolute;left:2222px;top:344px;width:177px;height:37px;background:#fff;"></div><div id="t103" class="t" style="top:340.6px;height:47px;line-height:47px;font-size:23.5px;letter-spacing:1.22px;color:#000;left:2228.0px;">kg</div><div style="position:absolute;left:2400px;top:344px;width:174px;height:37px;background:#fff;"></div><div id="t104" class="t" style="top:340.6px;height:47px;line-height:47px;font-size:23.5px;letter-spacing:0.06px;color:#000;left:2406.0px;">Jul-12-2024</div><div style="position:absolute;left:2575px;top:344px;width:194px;height:37px;background:#fff;"></div><div style="position:absolute;left:2770px;top:344px;width:190px;height:37px;background:#fff;"></div><div id="t105" class="t" style="top:340.6px;height:47px;line-height:47px;font-size:23.5px;letter-spacing:-0.81px;color:#000;left:2776.0px;">5.2</div><div style="position:absolute;left:440px;top:382px;width:92px;height:37px;background:#fff;"></div><div id="t106" class="t" style="top:378.6px;height:47px;line-height:47px;font-size:23.5px;letter-spacing:-0.17px;color:#000;left:447.5px;">391555</div><div style="position:absolute;left:533px;top:382px;width:167px;height:37px;background:#fff;"></div><div id="t107" class="t" style="top:378.6px;height:47px;line-height:47px;font-size:23.5px;letter-spacing:-0.14px;color:#000;left:539.0px;">BMCO-391555</div><div style="position:absolute;left:701px;top:382px;width:167px;height:37px;background:#fff;"></div><div id="t108" class="t" style="top:378.6px;height:47px;line-height:47px;font-size:23.5px;letter-spacing:-0.09px;color:#000;left:707.0px;">Brown, Bob</div><div style="position:absolute;left:869px;top:382px;width:154px;height:37px;background:#fff;"></div><div id="t109" class="t" style="top:378.6px;height:47px;line-height:47px;font-size:23.5px;letter-spacing:-0.76px;color:#000;left:874.5px;">BIG MEAT CO</div><div style="position:absolute;left:1024px;top:382px;width:125px;height:37px;background:#fff;"></div><div id="t110" class="t" style="top:378.6px;height:47px;line-height:47px;font-size:23.5px;letter-spacing:0.38px;color:#000;left:1030.0px;">Confirmed</div><div style="position:absolute;left:1150px;top:382px;width:117px;height:37px;background:#fff;"></div><div id="t111" class="t" style="top:378.6px;height:47px;line-height:47px;font-size:23.5px;letter-spacing:0.11px;color:#000;left:1156.0px;">Chilled</div><div style="position:absolute;left:1268px;top:382px;width:203px;height:37px;background:#fff;"></div><div id="t112" class="t" style="top:378.6px;height:47px;line-height:47px;font-size:23.5px;letter-spacing:-0.17px;color:#000;left:1274.0px;">September FH</div><div style="position:absolute;left:1472px;top:382px;width:245px;height:37px;background:#fff;"></div><div id="t113" class="t" style="top:378.6px;height:47px;line-height:47px;font-size:23.5px;letter-spacing:0.02px;color:#000;left:1478.0px;">Sep-08-2024</div><div style="position:absolute;left:1718px;top:382px;width:99px;height:37px;background:#fff;"></div><div id="t114" class="t" style="top:378.6px;height:47px;line-height:47px;font-size:23.5px;letter-spacing:-0.11px;color:#000;left:1724.0px;">Plant</div><div style="position:absolute;left:1818px;top:382px;width:273px;height:37px;background:#fff;"></div><div id="t115" class="t" style="top:378.6px;height:47px;line-height:47px;font-size:23.5px;letter-spacing:0.70px;color:#000;left:1824.0px;">Tokyo</div><div style="position:absolute;left:2092px;top:382px;width:129px;height:37px;background:#fff;"></div><div id="t116" class="t" style="top:378.6px;height:47px;line-height:47px;font-size:23.5px;letter-spacing:-1.80px;color:#000;left:2098.0px;">USD</div><div style="position:absolute;left:2222px;top:382px;width:177px;height:37px;background:#fff;"></div><div id="t117" class="t" style="top:378.6px;height:47px;line-height:47px;font-size:23.5px;letter-spacing:1.22px;color:#000;left:2228.0px;">kg</div><div style="position:absolute;left:2400px;top:382px;width:174px;height:37px;background:#fff;"></div><div id="t118" class="t" style="top:378.6px;height:47px;line-height:47px;font-size:23.5px;letter-spacing:0.06px;color:#000;left:2406.0px;">Jul-17-2024</div><div style="position:absolute;left:2575px;top:382px;width:194px;height:37px;background:#fff;"></div><div style="position:absolute;left:2770px;top:382px;width:190px;height:37px;background:#fff;"></div><div id="t119" class="t" style="top:378.6px;height:47px;line-height:47px;font-size:23.5px;letter-spacing:-0.81px;color:#000;left:2776.0px;">5.7</div><div style="position:absolute;left:440px;top:420px;width:92px;height:37px;background:#fff;"></div><div id="t120" class="t" style="top:416.6px;height:47px;line-height:47px;font-size:23.5px;letter-spacing:-0.17px;color:#000;left:447.5px;">391570</div><div style="position:absolute;left:533px;top:420px;width:167px;height:37px;background:#fff;"></div><div id="t121" class="t" style="top:416.6px;height:47px;line-height:47px;font-size:23.5px;letter-spacing:-0.14px;color:#000;left:539.0px;">BMCO-391570</div><div style="position:absolute;left:701px;top:420px;width:167px;height:37px;background:#fff;"></div><div id="t122" class="t" style="top:416.6px;height:47px;line-height:47px;font-size:23.5px;letter-spacing:-0.09px;color:#000;left:707.0px;">Brown, Bob</div><div style="position:absolute;left:869px;top:420px;width:154px;height:37px;background:#fff;"></div><div id="t123" class="t" style="top:416.6px;height:47px;line-height:47px;font-size:23.5px;letter-spacing:-0.76px;color:#000;left:874.5px;">BIG MEAT CO</div><div style="position:absolute;left:1024px;top:420px;width:125px;height:37px;background:#fff;"></div><div id="t124" class="t" style="top:416.6px;height:47px;line-height:47px;font-size:23.5px;letter-spacing:0.38px;color:#000;left:1030.0px;">Confirmed</div><div style="position:absolute;left:1150px;top:420px;width:117px;height:37px;background:#fff;"></div><div id="t125" class="t" style="top:416.6px;height:47px;line-height:47px;font-size:23.5px;letter-spacing:0.11px;color:#000;left:1156.0px;">Chilled</div><div style="position:absolute;left:1268px;top:420px;width:203px;height:37px;background:#fff;"></div><div id="t126" class="t" style="top:416.6px;height:47px;line-height:47px;font-size:23.5px;letter-spacing:-0.17px;color:#000;left:1274.0px;">September FH</div><div style="position:absolute;left:1472px;top:420px;width:245px;height:37px;background:#fff;"></div><div id="t127" class="t" style="top:416.6px;height:47px;line-height:47px;font-size:23.5px;letter-spacing:0.02px;color:#000;left:1478.0px;">Sep-14-2024</div><div style="position:absolute;left:1718px;top:420px;width:99px;height:37px;background:#fff;"></div><div id="t128" class="t" style="top:416.6px;height:47px;line-height:47px;font-size:23.5px;letter-spacing:-0.11px;color:#000;left:1724.0px;">Plant</div><div style="position:absolute;left:1818px;top:420px;width:273px;height:37px;background:#fff;"></div><div id="t129" class="t" style="top:416.6px;height:47px;line-height:47px;font-size:23.5px;letter-spacing:0.70px;color:#000;left:1824.0px;">Tokyo</div><div style="position:absolute;left:2092px;top:420px;width:129px;height:37px;background:#fff;"></div><div id="t130" class="t" style="top:416.6px;height:47px;line-height:47px;font-size:23.5px;letter-spacing:-1.80px;color:#000;left:2098.0px;">USD</div><div style="position:absolute;left:2222px;top:420px;width:177px;height:37px;background:#fff;"></div><div id="t131" class="t" style="top:416.6px;height:47px;line-height:47px;font-size:23.5px;letter-spacing:1.22px;color:#000;left:2228.0px;">kg</div><div style="position:absolute;left:2400px;top:420px;width:174px;height:37px;background:#fff;"></div><div id="t132" class="t" style="top:416.6px;height:47px;line-height:47px;font-size:23.5px;letter-spacing:0.06px;color:#000;left:2406.0px;">Jul-17-2024</div><div style="position:absolute;left:2575px;top:420px;width:194px;height:37px;background:#fff;"></div><div style="position:absolute;left:2770px;top:420px;width:190px;height:37px;background:#fff;"></div><div id="t133" class="t" style="top:416.6px;height:47px;line-height:47px;font-size:23.5px;letter-spacing:-0.81px;color:#000;left:2776.0px;">7.1</div><div style="position:absolute;left:439px;top:228px;width:2520px;height:2px;background:linear-gradient(#9a9693,#5e5a58);height:2.5px;top:227.5px;"></div><div style="position:absolute;left:439px;top:266px;width:2520px;height:2px;background:#000;"></div><div style="position:absolute;left:439px;top:304px;width:2520px;height:2px;background:#000;"></div><div style="position:absolute;left:439px;top:342px;width:2520px;height:2px;background:#000;"></div><div style="position:absolute;left:439px;top:380px;width:2520px;height:2px;background:#000;"></div><div style="position:absolute;left:439px;top:418px;width:2520px;height:2px;background:#000;"></div><div style="position:absolute;left:439px;top:456px;width:2520px;height:2px;background:#000;"></div><div style="position:absolute;left:439px;top:228px;width:2px;height:230px;background:#6e6a68;left:437px;width:3px;"></div><div style="position:absolute;left:531px;top:228px;width:2px;height:230px;background:#000;"></div><div style="position:absolute;left:699px;top:228px;width:2px;height:230px;background:#000;"></div><div style="position:absolute;left:867px;top:228px;width:2px;height:230px;background:#000;"></div><div style="position:absolute;left:1022px;top:228px;width:2px;height:230px;background:#000;"></div><div style="position:absolute;left:1148px;top:228px;width:2px;height:230px;background:#000;"></div><div style="position:absolute;left:1266px;top:228px;width:2px;height:230px;background:#000;"></div><div style="position:absolute;left:1470px;top:228px;width:2px;height:230px;background:#000;"></div><div style="position:absolute;left:1716px;top:228px;width:2px;height:230px;background:#000;"></div><div style="position:absolute;left:1816px;top:228px;width:2px;height:230px;background:#000;"></div><div style="position:absolute;left:2090px;top:228px;width:2px;height:230px;background:#000;"></div><div style="position:absolute;left:2220px;top:228px;width:2px;height:230px;background:#000;"></div><div style="position:absolute;left:2398px;top:228px;width:2px;height:230px;background:#000;"></div><div style="position:absolute;left:2573px;top:228px;width:2px;height:230px;background:#000;"></div><div style="position:absolute;left:2768px;top:228px;width:2px;height:230px;background:#000;"></div><div style="position:absolute;left:1184px;top:680px;width:1492px;height:33px;background:#cdcdcd;"></div><svg style="position:absolute;left:1160px;top:687px" width="16" height="20" viewBox="0 0 16 20" fill="none" stroke="#9a9a9a" stroke-width="2"><path d="M11 3 L4 10 L11 17"/></svg><svg style="position:absolute;left:2903px;top:687px" width="16" height="20" viewBox="0 0 16 20" fill="none" stroke="#9a9a9a" stroke-width="2"><path d="M5 3 L12 10 L5 17"/></svg></div>
<div id="t134" class="t" style="top:709.0px;height:47px;line-height:47px;font-size:23.5px;letter-spacing:-0.66px;color:#000;font-style:italic;left:920.3px;width:2000px;text-align:right;">Sales Reservations Listed: 6</div>
<!-- form -->
<div style="position:absolute;left:423px;top:758px;width:2500px;height:877px;border:6px solid #e8432a;background:#fff;"></div>
<div style="position:absolute;left:429px;top:802px;width:2499px;height:2px;background:#acacac;"></div>
<div style="position:absolute;left:429px;top:1636px;width:2499px;height:2px;background:#c8c8c8;"></div>
<div style="position:absolute;left:429px;top:764px;width:101px;height:40px;background:#fff;"></div>
<div id="t135" class="t" style="top:761.3px;height:43px;line-height:43px;font-size:21.6px;letter-spacing:-0.35px;color:#000;left:-520.7px;width:2000px;text-align:center;">General</div>
<div style="position:absolute;left:531px;top:764px;width:122px;height:36px;border:2px solid #acacac;background:linear-gradient(#f0f0f0,#e9e9e9);"></div>
<div id="t136" class="t" style="top:762.8px;height:43px;line-height:43px;font-size:21.6px;letter-spacing:-0.06px;color:#000;left:-406.0px;width:2000px;text-align:center;">Containers</div>
<div style="position:absolute;left:656px;top:764px;width:145px;height:36px;border:2px solid #acacac;background:linear-gradient(#f0f0f0,#e9e9e9);"></div>
<div id="t137" class="t" style="top:762.8px;height:43px;line-height:43px;font-size:21.6px;letter-spacing:0.36px;color:#000;left:-269.3px;width:2000px;text-align:center;">International</div>
<div style="position:absolute;left:804px;top:764px;width:107px;height:36px;border:2px solid #acacac;background:linear-gradient(#f0f0f0,#e9e9e9);"></div>
<div id="t138" class="t" style="top:762.8px;height:43px;line-height:43px;font-size:21.6px;letter-spacing:0.00px;color:#000;left:-140.5px;width:2000px;text-align:center;">Products</div>
<div style="position:absolute;left:914px;top:764px;width:143px;height:36px;border:2px solid #acacac;background:linear-gradient(#f0f0f0,#e9e9e9);"></div>
<div id="t139" class="t" style="top:762.8px;height:43px;line-height:43px;font-size:21.6px;letter-spacing:0.26px;color:#000;left:-12.4px;width:2000px;text-align:center;">Attachments</div>
<div style="position:absolute;left:1060px;top:764px;width:203px;height:36px;border:2px solid #acacac;background:linear-gradient(#f0f0f0,#e9e9e9);"></div>
<div id="t140" class="t" style="top:762.8px;height:43px;line-height:43px;font-size:21.6px;letter-spacing:0.17px;color:#000;left:163.6px;width:2000px;text-align:center;">Internal Comments</div>
<div id="t141" class="t" style="top:814.6px;height:43px;line-height:43px;font-size:21.6px;letter-spacing:-0.16px;color:#000;font-weight:bold;left:-1278.2px;width:2000px;text-align:right;">Customer</div>
<div style="position:absolute;left:732px;top:814px;width:476px;height:41.5px;border:2px solid #d9d9d9;background:#f0f0f0;"></div>
<div id="t142" class="t" style="top:814.6px;height:43px;line-height:43px;font-size:21.6px;letter-spacing:-0.72px;color:#000;left:744.0px;">BIG MEAT CO</div>
<svg style="position:absolute;left:1187px;top:830.5px" width="13" height="10.5" viewBox="-2 -2 13 10.5" fill="none" stroke="#b4b4b4" stroke-width="2"><path d="M0 0 L4.5 6.5 L9 0"/></svg>
<div id="t143" class="t" style="top:874.6px;height:43px;line-height:43px;font-size:21.6px;letter-spacing:0.05px;color:#000;font-weight:bold;left:-1277.9px;width:2000px;text-align:right;">Cooling Type</div>
<div style="position:absolute;left:732px;top:874px;width:196px;height:41.5px;border:2px solid #d9d9d9;background:#f0f0f0;"></div>
<div id="t144" class="t" style="top:874.6px;height:43px;line-height:43px;font-size:21.6px;letter-spacing:0.08px;color:#000;left:744.0px;">Chilled</div>
<svg style="position:absolute;left:907px;top:890.5px" width="13" height="10.5" viewBox="-2 -2 13 10.5" fill="none" stroke="#b4b4b4" stroke-width="2"><path d="M0 0 L4.5 6.5 L9 0"/></svg>
<div id="t145" class="t" style="top:934.6px;height:43px;line-height:43px;font-size:21.6px;letter-spacing:0.07px;color:#000;font-weight:bold;left:-1277.9px;width:2000px;text-align:right;">Frozen Priority</div>
<div style="position:absolute;left:732px;top:934px;width:196px;height:41.5px;border:2px solid #d9d9d9;background:#f0f0f0;"></div>
<div id="t146" class="t" style="top:934.6px;height:43px;line-height:43px;font-size:21.6px;letter-spacing:0.56px;color:#000;left:744.0px;">None</div>
<svg style="position:absolute;left:907px;top:950.5px" width="13" height="10.5" viewBox="-2 -2 13 10.5" fill="none" stroke="#b4b4b4" stroke-width="2"><path d="M0 0 L4.5 6.5 L9 0"/></svg>
<div id="t147" class="t" style="top:994.6px;height:43px;line-height:43px;font-size:21.6px;letter-spacing:-0.09px;color:#000;left:-1278.1px;width:2000px;text-align:right;">Created Date</div>
<div style="position:absolute;left:732px;top:994px;width:196px;height:41px;border:2px solid #b7b9c0;background:#fff;"></div>
<div id="t148" class="t" style="top:990.3px;height:43px;line-height:43px;font-size:21.6px;letter-spacing:0.03px;color:#8a8a8a;left:738.0px;">Jul-12-2024</div>
<div id="t149" class="t" style="top:1054.6px;height:43px;line-height:43px;font-size:21.6px;letter-spacing:-0.51px;color:#000;font-weight:bold;left:-1278.5px;width:2000px;text-align:right;">Sales Person</div>
<div style="position:absolute;left:732px;top:1054px;width:476px;height:41.5px;border:2px solid #d9d9d9;background:#f0f0f0;"></div>
<div id="t150" class="t" style="top:1054.6px;height:43px;line-height:43px;font-size:21.6px;letter-spacing:-0.10px;color:#000;left:744.0px;">Brown, Bob</div>
<svg style="position:absolute;left:1187px;top:1070.5px" width="13" height="10.5" viewBox="-2 -2 13 10.5" fill="none" stroke="#b4b4b4" stroke-width="2"><path d="M0 0 L4.5 6.5 L9 0"/></svg>
<div id="t151" class="t" style="top:1114.6px;height:43px;line-height:43px;font-size:21.6px;letter-spacing:-2.92px;color:#000;font-weight:bold;left:-1280.9px;width:2000px;text-align:right;">CSR</div>
<div style="position:absolute;left:732px;top:1114px;width:196px;height:41.5px;border:2px solid #d9d9d9;background:#f0f0f0;"></div>
<div id="t152" class="t" style="top:1114.6px;height:43px;line-height:43px;font-size:21.6px;letter-spacing:-0.03px;color:#000;left:744.0px;">Smith, Myles</div>
<svg style="position:absolute;left:907px;top:1130.5px" width="13" height="10.5" viewBox="-2 -2 13 10.5" fill="none" stroke="#b4b4b4" stroke-width="2"><path d="M0 0 L4.5 6.5 L9 0"/></svg>
<svg style="position:absolute;left:940px;top:1124px" width="24" height="26" viewBox="0 0 24 26" fill="none" stroke="#f7cfc9" stroke-width="2.6" stroke-linecap="round"><path d="M1.5 1.5 L22.5 24.5 M22.5 1.5 L1.5 24.5"/></svg>
<div id="t153" class="t" style="top:1174.6px;height:43px;line-height:43px;font-size:21.6px;letter-spacing:0.79px;color:#000;font-weight:bold;left:-1277.2px;width:2000px;text-align:right;">Weight UoM</div>
<div style="position:absolute;left:732px;top:1174px;width:196px;height:41.5px;border:2px solid #d9d9d9;background:#f0f0f0;"></div>
<div id="t154" class="t" style="top:1174.6px;height:43px;line-height:43px;font-size:21.6px;letter-spacing:1.08px;color:#000;left:744.0px;">kg</div>
<svg style="position:absolute;left:907px;top:1190.5px" width="13" height="10.5" viewBox="-2 -2 13 10.5" fill="none" stroke="#b4b4b4" stroke-width="2"><path d="M0 0 L4.5 6.5 L9 0"/></svg>
<div id="t155" class="t" style="top:1234.6px;height:43px;line-height:43px;font-size:21.6px;letter-spacing:0.04px;color:#000;font-weight:bold;left:-1278.0px;width:2000px;text-align:right;">Confirmed PO</div>
<div style="position:absolute;left:732px;top:1234px;width:476px;height:41px;border:2px solid #b7b9c0;background:#fff;"></div>
<div id="t156" class="t" style="top:1230.3px;height:43px;line-height:43px;font-size:21.6px;letter-spacing:-0.15px;color:#8a8a8a;left:738.0px;">BMCO-391264</div>
<div id="t157" class="t" style="top:1294.6px;height:43px;line-height:43px;font-size:21.6px;letter-spacing:0.17px;color:#000;font-weight:bold;left:-1277.8px;width:2000px;text-align:right;">Delivery Terms</div>
<div style="position:absolute;left:732px;top:1294px;width:196px;height:41.5px;border:2px solid #d9d9d9;background:#f0f0f0;"></div>
<div id="t158" class="t" style="top:1294.6px;height:43px;line-height:43px;font-size:21.6px;letter-spacing:-2.29px;color:#000;left:744.0px;">CIF</div>
<svg style="position:absolute;left:907px;top:1310.5px" width="13" height="10.5" viewBox="-2 -2 13 10.5" fill="none" stroke="#b4b4b4" stroke-width="2"><path d="M0 0 L4.5 6.5 L9 0"/></svg>
<div id="t159" class="t" style="top:1354.6px;height:43px;line-height:43px;font-size:21.6px;letter-spacing:-0.32px;color:#000;font-weight:bold;left:-1278.3px;width:2000px;text-align:right;">Currency</div>
<div style="position:absolute;left:732px;top:1354px;width:196px;height:41.5px;border:2px solid #d9d9d9;background:#f0f0f0;"></div>
<div id="t160" class="t" style="top:1354.6px;height:43px;line-height:43px;font-size:21.6px;letter-spacing:-1.69px;color:#000;left:744.0px;">USD</div>
<svg style="position:absolute;left:907px;top:1370.5px" width="13" height="10.5" viewBox="-2 -2 13 10.5" fill="none" stroke="#b4b4b4" stroke-width="2"><path d="M0 0 L4.5 6.5 L9 0"/></svg>
<div id="t161" class="t" style="top:1414.6px;height:43px;line-height:43px;font-size:21.6px;letter-spacing:0.05px;color:#000;font-weight:bold;left:-1278.0px;width:2000px;text-align:right;">Planning Only</div>
<div style="position:absolute;left:734px;top:1424px;width:24px;height:22px;border:2px solid #bcbcbc;background:#e6e6e6;"></div>
<div id="t162" class="t" style="top:1474.6px;height:43px;line-height:43px;font-size:21.6px;letter-spacing:0.17px;color:#000;font-weight:bold;left:-1277.8px;width:2000px;text-align:right;">Planning Priority Adj</div>
<div style="position:absolute;left:732px;top:1474px;width:196px;height:41px;border:2px solid #b7b9c0;background:#fff;"></div>
<div id="t163" class="t" style="top:1470.3px;height:43px;line-height:43px;font-size:21.6px;letter-spacing:-3.88px;color:#8a8a8a;left:740.0px;">1</div>
<div id="t164" class="t" style="top:814.6px;height:43px;line-height:43px;font-size:21.6px;letter-spacing:0.20px;color:#000;font-weight:bold;left:-358.3px;width:2000px;text-align:right;">Destination</div>
<div style="position:absolute;left:1652px;top:814px;width:436px;height:41px;border:2px solid #b7b9c0;background:#fff;"></div>
<div id="t165" class="t" style="top:814.6px;height:43px;line-height:43px;font-size:21.6px;letter-spacing:-0.23px;color:#8a8a8a;left:1662.0px;">Tokyo, Japan, Asia</div>
<div id="t166" class="t" style="top:874.6px;height:43px;line-height:43px;font-size:21.6px;letter-spacing:0.05px;color:#000;font-weight:bold;left:-358.4px;width:2000px;text-align:right;">Customer Destination</div>
<div style="position:absolute;left:1652px;top:874px;width:436px;height:41px;border:2px solid #b7b9c0;background:#fff;"></div>
<div id="t167" class="t" style="top:874.6px;height:43px;line-height:43px;font-size:21.6px;letter-spacing:-0.23px;color:#8a8a8a;left:1662.0px;">Tokyo, Japan, Asia</div>
<div id="t168" class="t" style="top:934.6px;height:43px;line-height:43px;font-size:21.6px;letter-spacing:-0.03px;color:#000;font-weight:bold;left:-358.5px;width:2000px;text-align:right;">Delivery Address</div>
<div style="position:absolute;left:1652px;top:940px;width:391px;height:151px;border:2px solid #d0d2d6;background:#fff;"></div>
<div id="t169" class="t" style="top:937.3px;height:43px;line-height:43px;font-size:21.6px;letter-spacing:0.11px;color:#8a8a8a;left:1658.0px;">789 Maple Drive</div>
<div id="t170" class="t" style="top:965.3px;height:43px;line-height:43px;font-size:21.6px;letter-spacing:-0.10px;color:#8a8a8a;left:1658.0px;">Missisauga ON</div>
<div id="t171" class="t" style="top:994.8px;height:43px;line-height:43px;font-size:21.6px;letter-spacing:-0.60px;color:#8a8a8a;left:1658.0px;">Canada</div>
<div id="t172" class="t" style="top:1023.3px;height:43px;line-height:43px;font-size:21.6px;letter-spacing:-0.60px;color:#8a8a8a;left:1658.0px;">L4T 0A1</div>
<div style="position:absolute;left:2008px;top:944px;width:35px;height:42px;border:2px solid #d9d9d9;background:#f0f0f0;"></div>
<svg style="position:absolute;left:2022.5px;top:960px" width="13" height="10" viewBox="-2 -2 13 10" fill="none" stroke="#bdbdbd" stroke-width="1.8"><path d="M0 0 L4.5 6 L9 0"/></svg>
<div id="t173" class="t" style="top:1114.6px;height:43px;line-height:43px;font-size:21.6px;letter-spacing:0.30px;color:#000;font-weight:bold;left:-358.2px;width:2000px;text-align:right;">Origin</div>
<div style="position:absolute;left:1652px;top:1114px;width:196px;height:41.5px;border:2px solid #d9d9d9;background:#f0f0f0;"></div>
<div style="position:absolute;left:0;top:0;width:1808.5px;height:1716px;overflow:hidden"><div id="t174" class="t" style="top:1114.6px;height:43px;line-height:43px;font-size:21.6px;letter-spacing:-0.24px;color:#000;left:1683.0px;">[Site] Plant, B</div></div>
<svg style="position:absolute;left:1827px;top:1130.5px" width="13" height="10.5" viewBox="-2 -2 13 10.5" fill="none" stroke="#b4b4b4" stroke-width="2"><path d="M0 0 L4.5 6.5 L9 0"/></svg>
<div style="position:absolute;left:1664px;top:1129px;width:12px;height:12px;background:#1d1b6b;"></div>
<div id="t175" class="t" style="top:1174.6px;height:43px;line-height:43px;font-size:21.6px;letter-spacing:0.25px;color:#000;font-weight:bold;left:-358.3px;width:2000px;text-align:right;">Tentative Load Date</div>
<div style="position:absolute;left:1652px;top:1174px;width:196px;height:41px;border:2px solid;border-color:#75879c #93a2b4 #b4c0cc #93a2b4;background:#fff;"></div>
<div id="t176" class="t" style="top:1174.6px;height:43px;line-height:43px;font-size:21.6px;letter-spacing:0.71px;color:#c3c3c3;left:1662.0px;">8/11/2024</div>
<svg style="position:absolute;left:1800px;top:1180px" width="40" height="34" viewBox="0 0 40 34">
<rect x="0.5" y="0.5" width="38" height="32" fill="#fbfbfb" stroke="#c9cdd2" stroke-width="1"/>
<rect x="0" y="0" width="2.5" height="33" fill="#9aa0a8"/>
<rect x="2.5" y="0.5" width="36" height="8" fill="#c6daef"/>
<circle cx="20" cy="4.5" r="1.8" fill="#fff"/>
<rect x="2.5" y="30" width="36" height="2" fill="#d5d8dc"/>
<text x="21" y="29.5" text-anchor="middle" font-family="Liberation Sans, sans-serif" font-size="19.5" fill="#b6b6b6" letter-spacing="0.8">15</text>
</svg>
<div id="t177" class="t" style="top:1234.6px;height:43px;line-height:43px;font-size:21.6px;letter-spacing:0.29px;color:#000;font-weight:bold;left:-358.2px;width:2000px;text-align:right;">Delivery Date</div>
<div style="position:absolute;left:1652px;top:1234px;width:196px;height:41px;border:2px solid;border-color:#75879c #93a2b4 #b4c0cc #93a2b4;background:#fff;"></div>
<div id="t178" class="t" style="top:1236.2px;height:43px;line-height:43px;font-size:21.6px;letter-spacing:-0.17px;color:#c3c3c3;left:1661.0px;">Select a date</div>
<svg style="position:absolute;left:1800px;top:1240px" width="40" height="34" viewBox="0 0 40 34">
<rect x="0.5" y="0.5" width="38" height="32" fill="#fbfbfb" stroke="#c9cdd2" stroke-width="1"/>
<rect x="0" y="0" width="2.5" height="33" fill="#9aa0a8"/>
<rect x="2.5" y="0.5" width="36" height="8" fill="#c6daef"/>
<circle cx="20" cy="4.5" r="1.8" fill="#fff"/>
<rect x="2.5" y="30" width="36" height="2" fill="#d5d8dc"/>
<text x="21" y="29.5" text-anchor="middle" font-family="Liberation Sans, sans-serif" font-size="19.5" fill="#b6b6b6" letter-spacing="0.8">15</text>
</svg>
<div id="t179" class="t" style="top:1294.6px;height:43px;line-height:43px;font-size:21.6px;letter-spacing:0.01px;color:#000;font-weight:bold;left:-358.5px;width:2000px;text-align:right;">Shipping Period</div>
<div style="position:absolute;left:1652px;top:1294px;width:196px;height:41.5px;border:2px solid #d9d9d9;background:#f0f0f0;"></div>
<div id="t180" class="t" style="top:1294.6px;height:43px;line-height:43px;font-size:21.6px;letter-spacing:-0.10px;color:#000;left:1664.0px;">August FH</div>
<svg style="position:absolute;left:1827px;top:1310.5px" width="13" height="10.5" viewBox="-2 -2 13 10.5" fill="none" stroke="#b4b4b4" stroke-width="2"><path d="M0 0 L4.5 6.5 L9 0"/></svg>
<div id="t181" class="t" style="top:1354.6px;height:43px;line-height:43px;font-size:21.6px;letter-spacing:-0.02px;color:#000;font-weight:bold;left:-358.5px;width:2000px;text-align:right;">Contract</div>
<div style="position:absolute;left:1652px;top:1354px;width:196px;height:41.5px;border:2px solid #d9d9d9;background:#f0f0f0;"></div>
<div style="position:absolute;left:0;top:0;width:1808.5px;height:1716px;overflow:hidden"><div id="t182" class="t" style="top:1354.6px;height:43px;line-height:43px;font-size:21.6px;letter-spacing:-1.02px;color:#000;left:1664.0px;">BIG MEAT CO/BEEF</div></div>
<svg style="position:absolute;left:1827px;top:1370.5px" width="13" height="10.5" viewBox="-2 -2 13 10.5" fill="none" stroke="#b4b4b4" stroke-width="2"><path d="M0 0 L4.5 6.5 L9 0"/></svg>
<svg style="position:absolute;left:1860px;top:1366px" width="24" height="26" viewBox="0 0 24 26" fill="none" stroke="#f7cfc9" stroke-width="2.6" stroke-linecap="round"><path d="M1.5 1.5 L22.5 24.5 M22.5 1.5 L1.5 24.5"/></svg>
<div id="t183" class="t" style="top:1414.6px;height:43px;line-height:43px;font-size:21.6px;letter-spacing:-0.19px;color:#000;font-weight:bold;left:-358.7px;width:2000px;text-align:right;">End Buyer (Chilled)</div>
<div style="position:absolute;left:1652px;top:1414px;width:196px;height:41.5px;border:2px solid #d9d9d9;background:#f0f0f0;"></div>
<div style="position:absolute;left:0;top:0;width:1808.5px;height:1716px;overflow:hidden"><div id="t184" class="t" style="top:1414.6px;height:43px;line-height:43px;font-size:21.6px;letter-spacing:-0.37px;color:#000;left:1664.0px;">Example Buyer</div></div>
<svg style="position:absolute;left:1827px;top:1430.5px" width="13" height="10.5" viewBox="-2 -2 13 10.5" fill="none" stroke="#b4b4b4" stroke-width="2"><path d="M0 0 L4.5 6.5 L9 0"/></svg>
<svg style="position:absolute;left:1860px;top:1426px" width="24" height="26" viewBox="0 0 24 26" fill="none" stroke="#f7cfc9" stroke-width="2.6" stroke-linecap="round"><path d="M1.5 1.5 L22.5 24.5 M22.5 1.5 L1.5 24.5"/></svg>
<!-- status -->
<div style="position:absolute;left:0px;top:1647px;width:2940px;height:69px;background:#2e343b;"></div>
<div style="position:absolute;left:274.5px;top:1647px;width:2.2px;height:69px;background:#e0e0e0;"></div>
<div style="position:absolute;left:574.5px;top:1647px;width:2.2px;height:69px;background:#e0e0e0;"></div>
<div style="position:absolute;left:31px;top:1670.5px;width:23.5px;height:23.5px;border-radius:50%;background:#3c8a2e;border:1.5px solid #a4ad9f;box-sizing:border-box;"></div>
<div id="t185" class="t" style="top:1659.8px;height:47px;line-height:47px;font-size:23.5px;letter-spacing:0.21px;color:#fff;left:65.0px;">Connection status</div>
<svg style="position:absolute;left:303px;top:1664px" width="34" height="34" viewBox="0 0 34 34" fill="#fff"><circle cx="17" cy="9.5" r="7.5"/><path d="M1 32 V28 C1 22.5 9 19.5 17 19.5 C25 19.5 33 22.5 33 28 V32 Z"/></svg>
<div id="t186" class="t" style="top:1659.8px;height:47px;line-height:47px;font-size:23.5px;letter-spacing:0.38px;color:#fff;left:344.0px;">APP2\Administrator</div>
<svg style="position:absolute;left:1860px;top:1666px" width="32" height="32" viewBox="0 0 32 32" fill="none" stroke="#e6e6e6" stroke-width="2.4"><circle cx="16" cy="16" r="12.5"/><path d="M16 14.5 V23" stroke-width="3"/><circle cx="16" cy="10" r="1.7" fill="#e6e6e6" stroke="none"/></svg>
<div id="t187" class="t" style="top:1659.8px;height:47px;line-height:47px;font-size:23.5px;letter-spacing:0.01px;color:#fff;font-weight:bold;left:1921.0px;">Sales Reservation: Filter Appli...</div>
<div id="t188" class="t" style="top:1659.8px;height:47px;line-height:47px;font-size:23.5px;letter-spacing:0.12px;color:#fff;left:910.1px;width:2000px;text-align:right;">Show Details</div>
</body></html>
